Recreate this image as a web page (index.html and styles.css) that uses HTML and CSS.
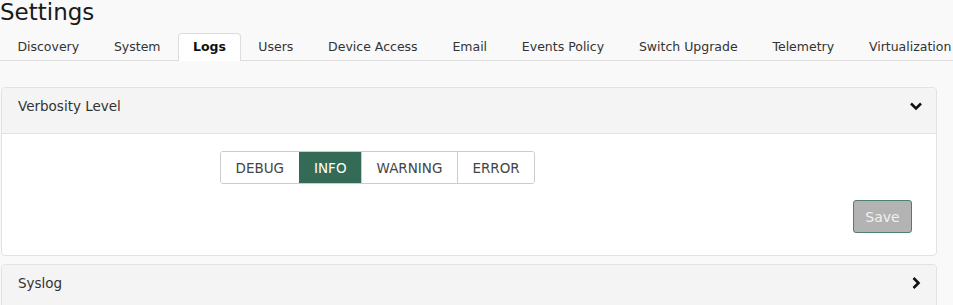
FILE: index.html
```html
<!DOCTYPE html>
<html lang="en">
  <head>
    <meta charset="UTF-8" />
    <meta name="viewport" content="width=device-width, initial-scale=1.0" />
    <title>Settings</title>
    <link rel="stylesheet" href="styles.css">
  </head>
  <body>
    <h1 class="page-title">Settings</h1>

    <nav class="tabs">
      <a class="tab">Discovery</a>
      <a class="tab">System</a>
      <a class="tab active">Logs</a>
      <a class="tab">Users</a>
      <a class="tab">Device Access</a>
      <a class="tab">Email</a>
      <a class="tab">Events Policy</a>
      <a class="tab">Switch Upgrade</a>
      <a class="tab">Telemetry</a>
      <a class="tab">Virtualization</a>
    </nav>

    <div class="content">
      <section class="panel">
        <div class="panel-header">
          <span>Verbosity Level</span>
          <svg class="chevron" width="14" height="14" viewBox="0 0 14 14">
            <path d="M2 4.5 L7 9.5 L12 4.5" fill="none" stroke="#111" stroke-width="2.6" />
          </svg>
        </div>
        <div class="panel-body">
          <div class="level-group">
            <button class="level">DEBUG</button>
            <button class="level selected">INFO</button>
            <button class="level">WARNING</button>
            <button class="level">ERROR</button>
          </div>
          <div class="actions">
            <button class="save-btn" disabled>Save</button>
          </div>
        </div>
      </section>

      <section class="panel">
        <div class="panel-header">
          <span>Syslog</span>
          <svg class="chevron" width="14" height="14" viewBox="0 0 14 14">
            <path d="M4.5 2 L9.5 7 L4.5 12" fill="none" stroke="#111" stroke-width="2.6" />
          </svg>
        </div>
      </section>
    </div>
  </body>
</html>
```

FILE: styles.css
```css
body {
  margin: 0;
  background-color: #f9f9f9;
  font-family: "DejaVu Sans", sans-serif;
  color: #333;
  overflow: hidden;
}

.page-title {
  margin: 0;
  font-size: 23px;
  font-weight: 400;
  line-height: 24px;
  color: #1a1a1a;
}

/* tab strip */
.tabs {
  display: flex;
  margin-top: 9px;
  border-bottom: 1px solid #ddd;
  white-space: nowrap;
}

.tab {
  padding: 0 16.4px;
  height: 26px;
  line-height: 26px;
  font-size: 12.5px;
  color: #333;
  border: 1px solid transparent;
  border-bottom: none;
  border-radius: 4px 4px 0 0;
  margin-bottom: -1px;
}

.tab.active {
  background-color: #fff;
  border-color: #ddd;
  font-weight: bold;
  color: #111;
  height: 27px;
  padding: 0 14px;
}

/* panels */
.content {
  padding: 26px 16px 0 1px;
}

.panel {
  background-color: #fff;
  border: 1px solid #e2e2e2;
  border-radius: 4px;
  margin-bottom: 8px;
}

.panel-header {
  display: flex;
  align-items: flex-start;
  justify-content: space-between;
  height: 45px;
  box-sizing: border-box;
  padding: 9px 13px 0 16px;
  line-height: 18px;
  background-color: #f4f4f4;
  font-size: 13.5px;
  color: #333;
  border-radius: 4px 4px 0 0;
}

.chevron {
  margin-top: 2px;
}

.panel-body {
  border-top: 1px solid #e2e2e2;
  padding: 17px 24px 22px 218px;
}

.level-group {
  display: inline-flex;
  border: 1px solid #ccc;
  border-radius: 3px;
  overflow: hidden;
}

.level {
  height: 31px;
  padding: 0 14.5px;
  background-color: #fff;
  border: none;
  border-left: 1px solid #ccc;
  font-family: "DejaVu Sans", sans-serif;
  font-size: 13.5px;
  color: #444;
}

.level:first-child {
  border-left: none;
}

.level.selected {
  background-color: #336b57;
  color: #fff;
  border-left-color: #336b57;
}

.actions {
  display: flex;
  justify-content: flex-end;
  margin-top: 16px;
}

.save-btn {
  width: 59px;
  height: 33px;
  background-color: #b3b3b3;
  border: 1px solid #4f7f6d;
  border-radius: 3px;
  color: #f0f0f0;
  font-family: "DejaVu Sans", sans-serif;
  font-size: 14px;
}
```
